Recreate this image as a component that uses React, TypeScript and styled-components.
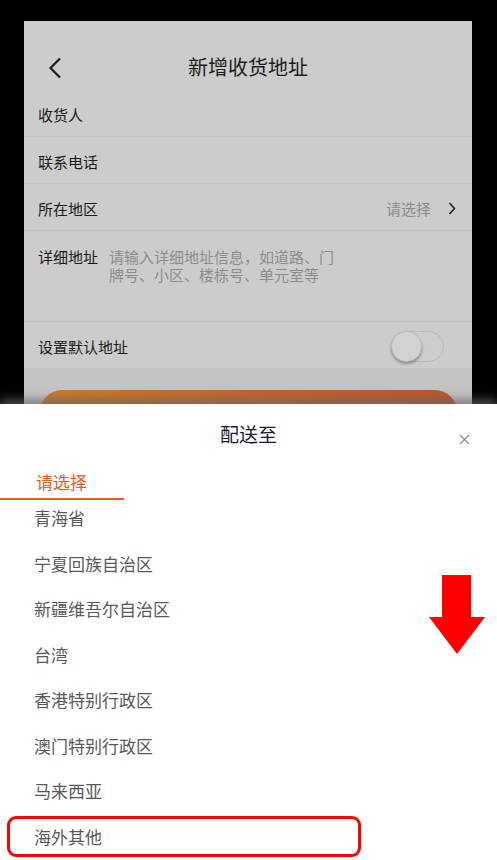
import React from "react";
import styled, { createGlobalStyle } from "styled-components";

const GlobalStyle = createGlobalStyle`
  html, body {
    margin: 0;
    padding: 0;
    background: #000;
  }
  body {
    font-family: "Noto Sans CJK SC", "Noto Sans", sans-serif;
  }
`;

const Page = styled.div`
  width: 497px;
  height: 860px;
  display: flex;
  flex-direction: column;
  background: #000;
  overflow: hidden;
`;

// dimmed form screen behind the sheet
const Backdrop = styled.div`
  flex: none;
  height: 404px;
  padding: 21px 25px 0 24px;
  box-sizing: border-box;
  overflow: hidden;
`;

const Panel = styled.div`
  background: #cccccc;
  height: 100%;
  display: flex;
  flex-direction: column;
`;

const NavBar = styled.div`
  flex: none;
  height: 69px;
  display: grid;
  grid-template-columns: 1fr auto 1fr;
  align-items: start;
  padding-top: 33px;
  box-sizing: border-box;
`;

const BackButton = styled.div`
  padding-left: 24px;
  margin-top: 3px;
  display: flex;
`;

const NavTitle = styled.div`
  font-size: 20px;
  line-height: 26px;
  color: #1c1c1c;
`;

const Row = styled.div<{ $tall?: boolean }>`
  flex: none;
  display: flex;
  align-items: ${(p) => (p.$tall ? "flex-start" : "center")};
  height: ${(p) => (p.$tall ? "91px" : "47px")};
  padding: ${(p) => (p.$tall ? "17px 16px 0 14px" : "3px 16px 0 14px")};
  box-sizing: border-box;
  border-bottom: 1px solid #c1c1c1;
  font-size: 15px;
  line-height: 18px;
  color: #1b1b1b;
`;

const Label = styled.span`
  flex: none;
`;

const Placeholder = styled.span`
  width: 232px;
  margin-left: 11px;
  color: #8c8c8c;
  line-height: 18px;
`;

const RowValue = styled.span`
  margin-left: auto;
  display: flex;
  align-items: center;
  gap: 17px;
  color: #8c8c8c;
`;

const Toggle = styled.div`
  margin-left: auto;
  margin-right: 12px;
  width: 53px;
  height: 31px;
  border-radius: 16px;
  border: 1px solid #b9b9b9;
  box-sizing: border-box;
  position: relative;
  background: #cdcdcd;
`;

const Knob = styled.div`
  position: absolute;
  left: -1px;
  top: -1px;
  width: 31px;
  height: 31px;
  border-radius: 50%;
  background: #d2d2d2;
  border: 1px solid #bdbdbd;
  box-sizing: border-box;
  box-shadow: 0 2px 3px rgba(0, 0, 0, 0.3);
`;

const Footer = styled.div`
  flex: 1;
  background: #c4c4c4;
  padding: 22px 15px 0 16px;
  margin-top: -1px;
`;

const SaveButton = styled.div`
  height: 44px;
  border-radius: 22px;
  background: linear-gradient(90deg, #c97a2c, #b9552c);
`;

// bottom sheet
const Sheet = styled.div`
  position: relative;
  flex: 1;
  background: #fff;
  box-shadow: 0 -5px 9px rgba(100, 100, 100, 0.7);
`;

const SheetHeader = styled.div`
  height: 56px;
  display: grid;
  grid-template-columns: 1fr auto 1fr;
  align-items: start;
  padding-top: 17px;
  box-sizing: border-box;
`;

const SheetTitle = styled.div`
  font-size: 19px;
  line-height: 26px;
  color: #1a1a2c;
`;

const CloseButton = styled.div`
  justify-self: end;
  margin-right: 27px;
  margin-top: 13px;
  display: flex;
`;

const TabBar = styled.div`
  height: 40px;
  display: flex;
`;

const Tab = styled.div`
  width: 124px;
  box-sizing: border-box;
  padding: 10px 0 4px 36px;
  font-size: 17px;
  line-height: 24px;
  color: #ef5a23;
  border-bottom: 2px solid #ef5a23;
`;

const List = styled.div`
  display: flex;
  flex-direction: column;
`;

const Item = styled.div`
  position: relative;
  flex: none;
  height: 45.57px;
  padding: 8px 0 0 34px;
  box-sizing: border-box;
  font-size: 17px;
  line-height: 20px;
  color: #595959;
`;

const Highlight = styled.div`
  position: absolute;
  left: 7px;
  top: -3px;
  width: 354px;
  height: 41px;
  border: 3px solid #ff0000;
  border-radius: 9px;
  box-sizing: border-box;
`;

const Arrow = styled.svg`
  position: absolute;
  left: 429px;
  top: 171px;
`;

const regions = [
  "青海省",
  "宁夏回族自治区",
  "新疆维吾尔自治区",
  "台湾",
  "香港特别行政区",
  "澳门特别行政区",
  "马来西亚",
  "海外其他",
];

export default function App() {
  return (
    <Page>
      <GlobalStyle />
      <Backdrop>
        <Panel>
          <NavBar>
            <BackButton>
              <svg width="14" height="22" viewBox="0 0 14 22">
                <polyline
                  points="12,1.5 2.5,11 12,20.5"
                  fill="none"
                  stroke="#1f1f1f"
                  strokeWidth="2.2"
                />
              </svg>
            </BackButton>
            <NavTitle>新增收货地址</NavTitle>
            <div />
          </NavBar>
          <Row>
            <Label>收货人</Label>
          </Row>
          <Row>
            <Label>联系电话</Label>
          </Row>
          <Row>
            <Label>所在地区</Label>
            <RowValue>
              请选择
              <svg width="8" height="13" viewBox="0 0 8 13">
                <polyline
                  points="1.5,1 6.5,6.5 1.5,12"
                  fill="none"
                  stroke="#222"
                  strokeWidth="1.6"
                />
              </svg>
            </RowValue>
          </Row>
          <Row $tall>
            <Label>详细地址</Label>
            <Placeholder>请输入详细地址信息，如道路、门牌号、小区、楼栋号、单元室等</Placeholder>
          </Row>
          <Row>
            <Label>设置默认地址</Label>
            <Toggle>
              <Knob />
            </Toggle>
          </Row>
          <Footer>
            <SaveButton />
          </Footer>
        </Panel>
      </Backdrop>

      <Sheet>
        <SheetHeader>
          <div />
          <SheetTitle>配送至</SheetTitle>
          <CloseButton>
            <svg width="11" height="11" viewBox="0 0 11 11">
              <path d="M1 1L10 10M10 1L1 10" stroke="#8a8a8a" strokeWidth="1.2" />
            </svg>
          </CloseButton>
        </SheetHeader>
        <TabBar>
          <Tab>请选择</Tab>
        </TabBar>
        <List>
          {regions.map((name, i) => (
            <Item key={name}>
              {name}
              {i === regions.length - 1 && <Highlight />}
            </Item>
          ))}
        </List>
        <Arrow width="57" height="80" viewBox="0 0 57 80">
          <polygon points="13,0 42,0 42,42 56,42 28,79 0,42 13,42" fill="#ff0000" />
        </Arrow>
      </Sheet>
    </Page>
  );
}
